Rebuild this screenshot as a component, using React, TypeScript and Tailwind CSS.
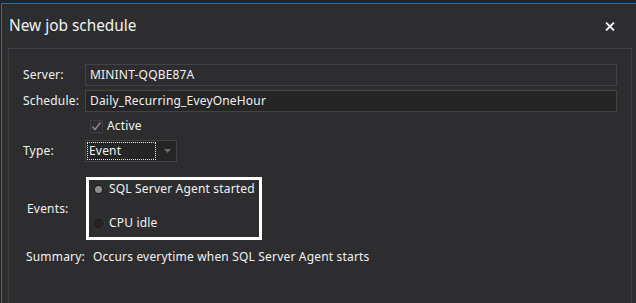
import React from 'react'

const font = { fontFamily: '"Segoe UI", "Noto Sans", sans-serif' }

function CloseIcon() {
  return (
    <svg width="10" height="9" viewBox="0 0 10 9" className="block">
      <path d="M1 0.5 L9 8.5 M9 0.5 L1 8.5" stroke="#f1f1f1" strokeWidth="1.8" />
    </svg>
  )
}

function Radio({ checked, label }: { checked?: boolean; label: string }) {
  return (
    <div className="flex items-center h-[18px] whitespace-nowrap">
      <div className="shrink-0 w-[13px] h-[13px] rounded-full bg-[#232325] border border-[#3a3a3d] flex items-center justify-center">
        {checked && <div className="w-[7px] h-[7px] rounded-full bg-[#8c8c8c]" />}
      </div>
      <span className="ml-[4px] text-[12px] text-[#f1f1f1]">{label}</span>
    </div>
  )
}

export default function App() {
  return (
    <div className="w-[636px] h-[303px] bg-[#252526] overflow-hidden pt-[3px] pl-[1px]" style={font}>
      <div className="h-full border-t border-l border-[#1f6fb2] bg-[#2d2d30]">
        <div className="h-[44px] flex items-center justify-between pl-[7px] pr-[21px]">
          <span className="text-[15.4px] text-[#f1f1f1]">New job schedule</span>
          <CloseIcon />
        </div>
        <div className="ml-[6px] mr-[4px] h-[300px] border border-[#3f3f46] pl-[14px] pr-[14px] pt-[15px] text-[12px] tracking-[0.18px] text-[#f1f1f1] whitespace-nowrap">
          <div className="flex items-center h-[22px]">
            <span className="w-[62px]">Server:</span>
            <div className="flex-1 h-[22px] border border-[#434346] bg-[#2d2d30] px-[4px] flex items-center">MININT-QQBE87A</div>
          </div>
          <div className="flex items-center h-[22px] mt-[4px]">
            <span className="w-[62px]">Schedule:</span>
            <div className="flex-1 h-[22px] border border-[#434346] bg-[#252526] px-[4px] flex items-center">Daily_Recurring_EveyOneHour</div>
          </div>
          <div className="flex items-center h-[22px] mt-[3px] pl-[67px]">
            <div className="w-[13px] h-[13px] border border-[#3f3f46] bg-[#2d2d30] flex items-center justify-center">
              <svg width="11" height="11" viewBox="0 0 11 11">
                <path d="M1.5 5.5 L4 8.5 L9.5 1.5" stroke="#8a8a8a" strokeWidth="1.5" fill="none" />
              </svg>
            </div>
            <span className="ml-[4px]">Active</span>
          </div>
          <div className="flex items-center h-[22px] mt-[3px]">
            <span className="w-[62px]">Type:</span>
            <div className="w-[92px] h-[22px] border border-[#434346] bg-[#252526] flex items-center p-[1px]">
              <div className="w-[69px] h-[18px] border border-dotted border-[#e8e8e8] flex items-center pl-[1px]">Event</div>
              <svg width="7" height="4" viewBox="0 0 7 4" className="ml-[8px]">
                <path d="M0 0 L7 0 L3.5 4 Z" fill="#6b6b6b" />
              </svg>
            </div>
          </div>
          <div className="flex items-center mt-[15px]">
            <span className="w-[63px] pl-[4px]">Events:</span>
            <div className="w-[176px] h-[63px] border-[3px] border-white px-[3px] flex flex-col gap-[16px]">
              <Radio checked label="SQL Server Agent started" />
              <Radio label="CPU idle" />
            </div>
          </div>
          <div className="flex items-center h-[22px] mt-[6px] pl-[3px]">
            <span className="w-[67px]">Summary:</span>
            <span>Occurs everytime when SQL Server Agent starts</span>
          </div>
        </div>
      </div>
    </div>
  )
}
